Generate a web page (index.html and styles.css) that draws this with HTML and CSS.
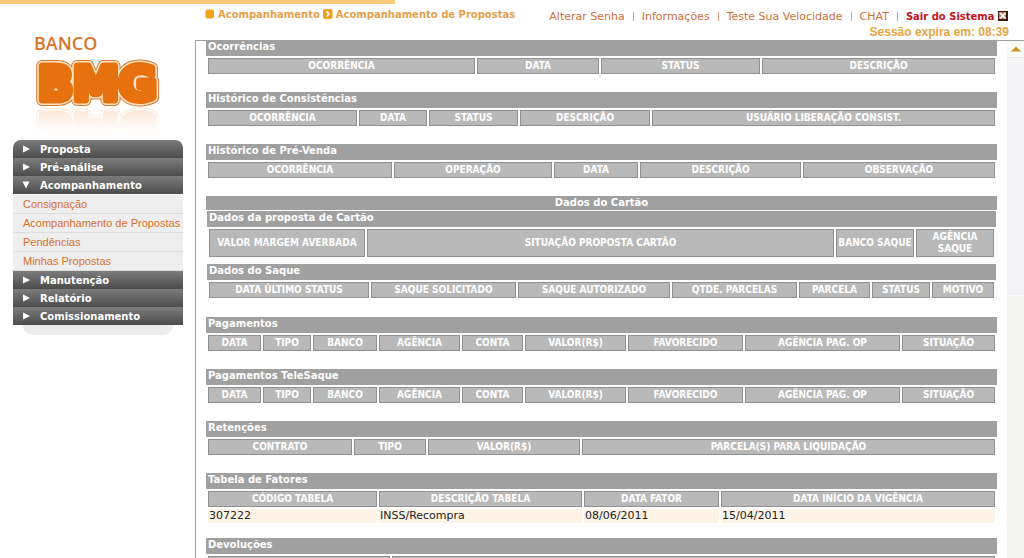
FILE: index.html
```html
<!DOCTYPE html>
<html lang="pt-BR">
<head>
<meta charset="utf-8">
<title>Acompanhamento de Propostas</title>
<link rel="stylesheet" href="styles.css">
</head>
<body>
<div class="page">
  <aside class="sidebar">
    <div class="logo">
      <div class="logo-name">BANCO</div>
      <svg class="logo-mark" viewBox="0 0 126 48" width="126" height="48" role="img" aria-label="BMG">
        <defs><text id="bmg" x="4" y="41">BMG</text></defs>
        <use href="#bmg" class="mark-edge"/>
        <use href="#bmg" class="mark-gap"/>
        <use href="#bmg" class="mark-fill"/>
      </svg>
    </div>
    <nav class="menu">
      <button class="menu-item" type="button"><svg class="arrow" viewBox="0 0 8 8"><path d="M1 0.5L8 4L1 7.5Z"/></svg>Proposta</button>
      <button class="menu-item" type="button"><svg class="arrow" viewBox="0 0 8 8"><path d="M1 0.5L8 4L1 7.5Z"/></svg>Pré-análise</button>
      <button class="menu-item" type="button"><svg class="arrow" viewBox="0 0 8 8"><path d="M0.5 0.5H7.5L4 7.5Z"/></svg>Acompanhamento</button>
      <div class="submenu">
        <a href="#">Consignação</a>
        <a href="#">Acompanhamento de Propostas</a>
        <a href="#">Pendências</a>
        <a href="#">Minhas Propostas</a>
      </div>
      <button class="menu-item" type="button"><svg class="arrow" viewBox="0 0 8 8"><path d="M1 0.5L8 4L1 7.5Z"/></svg>Manutenção</button>
      <button class="menu-item" type="button"><svg class="arrow" viewBox="0 0 8 8"><path d="M1 0.5L8 4L1 7.5Z"/></svg>Relatório</button>
      <button class="menu-item" type="button"><svg class="arrow" viewBox="0 0 8 8"><path d="M1 0.5L8 4L1 7.5Z"/></svg>Comissionamento</button>
      <div class="menu-foot"></div>
    </nav>
  </aside>
  <div class="main">
    <header class="topbar">
      <div class="crumbs">
        <svg viewBox="0 0 10 10" width="10" height="10"><rect x="0.5" y="0.5" width="8.5" height="9" rx="2" fill="#f0a41c"/></svg>
        <span>Acompanhamento</span>
        <svg viewBox="0 0 10 10" width="10" height="10"><rect width="9.5" height="10" rx="2" fill="#eda01a"/><path d="M3.5 2.5L6 5L3.5 7.5" fill="none" stroke="#fff" stroke-width="1.6"/></svg>
        <span>Acompanhamento de Propostas</span>
      </div>
      <div class="session">
        <div class="links">
          <a href="#">Alterar Senha</a><i></i><a href="#">Informações</a><i></i><a href="#">Teste Sua Velocidade</a><i></i><a href="#">CHAT</a><i></i><a href="#" class="exit">Sair do Sistema
          <svg viewBox="0 0 10 10" width="10" height="10"><rect width="10" height="10" fill="#3a1c10"/><rect x="1" y="1" width="7" height="7" fill="#b88a68"/><path d="M2 2L7.5 7.5M7.5 2L2 7.5" stroke="#fff" stroke-width="1.6"/></svg></a>
        </div>
        <div class="timer">Sessão expira em: 08:39</div>
      </div>
    </header>
    <div class="frame">
      <div class="content">
        <section>
          <h2>Ocorrências</h2>
          <table class="t-occ"><colgroup><col><col><col><col></colgroup>
            <tr><th>OCORRÊNCIA</th><th>DATA</th><th>STATUS</th><th>DESCRIÇÃO</th></tr></table>
        </section>
        <section>
          <h2>Histórico de Consistências</h2>
          <table class="t-cons"><colgroup><col><col><col><col><col></colgroup>
            <tr><th>OCORRÊNCIA</th><th>DATA</th><th>STATUS</th><th>DESCRIÇÃO</th><th>USUÁRIO LIBERAÇÃO CONSIST.</th></tr></table>
        </section>
        <section>
          <h2>Histórico de Pré-Venda</h2>
          <table class="t-pre"><colgroup><col><col><col><col><col></colgroup>
            <tr><th>OCORRÊNCIA</th><th>OPERAÇÃO</th><th>DATA</th><th>DESCRIÇÃO</th><th>OBSERVAÇÃO</th></tr></table>
        </section>
        <section class="card">
          <h2 class="card-title">Dados do Cartão</h2>
          <div class="card-body">
            <h2>Dados da proposta de Cartão</h2>
            <table class="t-card"><colgroup><col><col><col><col></colgroup>
              <tr><th>VALOR MARGEM AVERBADA</th><th>SITUAÇÃO PROPOSTA CARTÃO</th><th>BANCO SAQUE</th><th>AGÊNCIA SAQUE</th></tr></table>
            <h2 class="next">Dados do Saque</h2>
            <table class="t-saque"><colgroup><col><col><col><col><col><col><col></colgroup>
              <tr><th>DATA ÚLTIMO STATUS</th><th>SAQUE SOLICITADO</th><th>SAQUE AUTORIZADO</th><th>QTDE. PARCELAS</th><th>PARCELA</th><th>STATUS</th><th>MOTIVO</th></tr></table>
          </div>
        </section>
        <section>
          <h2>Pagamentos</h2>
          <table class="t-pag"><colgroup><col><col><col><col><col><col><col><col><col></colgroup>
            <tr><th>DATA</th><th>TIPO</th><th>BANCO</th><th>AGÊNCIA</th><th>CONTA</th><th>VALOR(R$)</th><th>FAVORECIDO</th><th>AGÊNCIA PAG. OP</th><th>SITUAÇÃO</th></tr></table>
        </section>
        <section>
          <h2>Pagamentos TeleSaque</h2>
          <table class="t-pag"><colgroup><col><col><col><col><col><col><col><col><col></colgroup>
            <tr><th>DATA</th><th>TIPO</th><th>BANCO</th><th>AGÊNCIA</th><th>CONTA</th><th>VALOR(R$)</th><th>FAVORECIDO</th><th>AGÊNCIA PAG. OP</th><th>SITUAÇÃO</th></tr></table>
        </section>
        <section>
          <h2>Retenções</h2>
          <table class="t-ret"><colgroup><col><col><col><col></colgroup>
            <tr><th>CONTRATO</th><th>TIPO</th><th>VALOR(R$)</th><th>PARCELA(S) PARA LIQUIDAÇÃO</th></tr></table>
        </section>
        <section class="factors">
          <h2>Tabela de Fatores</h2>
          <table class="t-fat"><colgroup><col><col><col><col></colgroup>
            <tr><th>CÓDIGO TABELA</th><th>DESCRIÇÃO TABELA</th><th>DATA FATOR</th><th>DATA INÍCIO DA VIGÊNCIA</th></tr>
            <tr><td>307222</td><td>INSS/Recompra</td><td>08/06/2011</td><td>15/04/2011</td></tr></table>
        </section>
        <section>
          <h2>Devoluções</h2>
          <table class="t-dev"><colgroup><col><col></colgroup>
            <tr><th></th><th></th></tr></table>
        </section>
      </div>
      <div class="scrollbar">
        <div class="scroll-up"><svg viewBox="0 0 10 6" width="10" height="6"><path d="M0 5.5L5 0.5L10 5.5Z" fill="#c8961e"/></svg></div>
        <div class="scroll-thumb"></div>
      </div>
    </div>
  </div>
</div>
</body>
</html>
```
FILE: styles.css
```css
* { box-sizing: border-box; }
body {
  margin: 0;
  background: #fff;
  font-family: "DejaVu Sans", Verdana, sans-serif;
  font-size: 10px;
}
a { color: inherit; text-decoration: none; }
.page {
  display: flex;
  height: 100vh;
  overflow: hidden;
  background: linear-gradient(#fbcb7c, #fbcb7c) no-repeat 0 0 / 395px 4px;
}

/* Sidebar */
.sidebar { flex: 0 0 195px; padding: 34px 12px 0 13px; }
.logo { height: 106px; padding-left: 21px; }
.logo-name {
  color: #d9762b;
  font: 600 18px/18px "Open Sans", sans-serif;
}
.logo-mark {
  display: block;
  margin-top: 7px;
  font: bold 46px "DejaVu Sans", sans-serif;
  stroke-linejoin: round;
  -webkit-box-reflect: below 0 linear-gradient(transparent 45%, rgba(0, 0, 0, 0.18));
}
.mark-edge { fill: #d9762b; stroke: #d9762b; stroke-width: 12px; }
.mark-gap { fill: #fde6c8; stroke: #fde6c8; stroke-width: 10px; }
.mark-fill { fill: #e8710f; stroke: #e8710f; stroke-width: 7px; }

.menu { display: flex; flex-direction: column; width: 170px; }
.menu-item {
  display: flex;
  align-items: center;
  gap: 10px;
  height: 18px;
  padding: 0 9px;
  border: 0;
  background: linear-gradient(#7c7c7c, #4c4c4c);
  color: #fff;
  font: bold 10px "DejaVu Sans", Verdana, sans-serif;
  text-align: left;
}
.menu-item:first-child { border-radius: 8px 8px 0 0; }
.arrow { width: 8px; height: 8px; fill: #fff; }
.submenu { display: flex; flex-direction: column; padding-top: 1px; }
.submenu a {
  height: 19px;
  padding-left: 10px;
  border-bottom: 1px solid #ddd;
  background: #eee;
  color: #d9702c;
  font: 11px/18px "Liberation Sans", Arial, sans-serif;
  white-space: nowrap;
}
.menu-foot {
  height: 10px;
  margin: 0 10px;
  border-radius: 0 0 10px 10px;
  background: #ececec;
}

/* Header */
.main { flex: 1; min-width: 0; display: flex; flex-direction: column; }
.topbar {
  flex: 0 0 40px;
  display: flex;
  justify-content: space-between;
  padding: 9px 15px 0 10px;
  white-space: nowrap;
}
.crumbs {
  display: flex;
  gap: 3px;
  height: 12px;
  color: #e5a04a;
  font-weight: bold;
  line-height: 12px;
}
.links {
  display: flex;
  justify-content: flex-end;
  align-items: center;
  height: 15px;
  padding-right: 1px;
  color: #cf6f38;
  font-size: 11px;
}
.links i { width: 1px; height: 9px; margin: 0 8px; background: #e0a080; }
.links .exit { color: #c4141c; font-weight: bold; font-size: 10px; }
.exit svg { vertical-align: -1px; }
.timer {
  color: #e8a444;
  font: bold 12px/16px "Liberation Sans", Arial, sans-serif;
  text-align: right;
}

/* Report frame */
.frame {
  flex: 1;
  min-height: 0;
  display: flex;
  overflow: hidden;
  border: solid #a0a0a0;
  border-width: 1px 0 0 1px;
}
.content { flex: 1; min-width: 0; margin-top: -1px; padding: 0 10px; }
section { margin-bottom: 16px; }
h2 {
  height: 16px;
  margin: 0;
  padding: 0 2px;
  background: #a0a0a0;
  color: #fff;
  font-size: 10px;
  line-height: 14px;
}
table { width: 100%; table-layout: fixed; border-spacing: 2px; }
th {
  height: 16px;
  padding: 0;
  border: 1px solid #909090;
  background: #b9b9b9;
  color: #fff;
  font: bold 10px/12px "DejaVu Sans Condensed", Tahoma, sans-serif;
}
td {
  height: 14px;
  padding: 0 1px;
  background: #fdf3e6;
  color: #222;
  font-size: 11px;
  line-height: 14px;
}

.card-title { height: 14px; text-align: center; }
.card-body { padding: 1px 1px 0; }
.card-body .next { margin-top: 5px; }
.card { margin-bottom: 17px; }
.t-card th { height: 28px; }
.factors { margin-bottom: 13px; }

.t-occ col:nth-child(1) { width: 267px; }
.t-occ col:nth-child(2) { width: 122px; }
.t-occ col:nth-child(3) { width: 159px; }
.t-occ col:nth-child(4) { width: 233px; }

.t-cons col:nth-child(1) { width: 149px; }
.t-cons col:nth-child(2) { width: 68px; }
.t-cons col:nth-child(3) { width: 89px; }
.t-cons col:nth-child(4) { width: 130px; }
.t-cons col:nth-child(5) { width: 343px; }

.t-pre col:nth-child(1) { width: 184px; }
.t-pre col:nth-child(2) { width: 158px; }
.t-pre col:nth-child(3) { width: 84px; }
.t-pre col:nth-child(4) { width: 161px; }
.t-pre col:nth-child(5) { width: 192px; }

.t-card col:nth-child(1) { width: 156px; }
.t-card col:nth-child(2) { width: 467px; }
.t-card col:nth-child(3) { width: 78px; }
.t-card col:nth-child(4) { width: 78px; }

.t-saque col:nth-child(1) { width: 160px; }
.t-saque col:nth-child(2) { width: 145px; }
.t-saque col:nth-child(3) { width: 152px; }
.t-saque col:nth-child(4) { width: 125px; }
.t-saque col:nth-child(5) { width: 71px; }
.t-saque col:nth-child(6) { width: 58px; }
.t-saque col:nth-child(7) { width: 62px; }

.t-pag col:nth-child(1) { width: 53px; }
.t-pag col:nth-child(2) { width: 48px; }
.t-pag col:nth-child(3) { width: 64px; }
.t-pag col:nth-child(4) { width: 81px; }
.t-pag col:nth-child(5) { width: 61px; }
.t-pag col:nth-child(6) { width: 101px; }
.t-pag col:nth-child(7) { width: 115px; }
.t-pag col:nth-child(8) { width: 155px; }
.t-pag col:nth-child(9) { width: 93px; }

.t-ret col:nth-child(1) { width: 144px; }
.t-ret col:nth-child(2) { width: 72px; }
.t-ret col:nth-child(3) { width: 152px; }
.t-ret col:nth-child(4) { width: 413px; }

.t-fat col:nth-child(1) { width: 169px; }
.t-fat col:nth-child(2) { width: 203px; }
.t-fat col:nth-child(3) { width: 135px; }
.t-fat col:nth-child(4) { width: 274px; }

.t-dev col:nth-child(1) { width: 182px; }
.t-dev col:nth-child(2) { width: 603px; }

.scrollbar { flex: 0 0 17px; background: #f3f3ef; }
.scroll-up {
  display: flex;
  align-items: center;
  justify-content: center;
  height: 17px;
  border-bottom: 1px solid #e6e6e6;
  background: #fafaf6;
}
.scroll-thumb { height: 46%; background: #f4f4f6; border-bottom: 1px solid #fff; }
```
